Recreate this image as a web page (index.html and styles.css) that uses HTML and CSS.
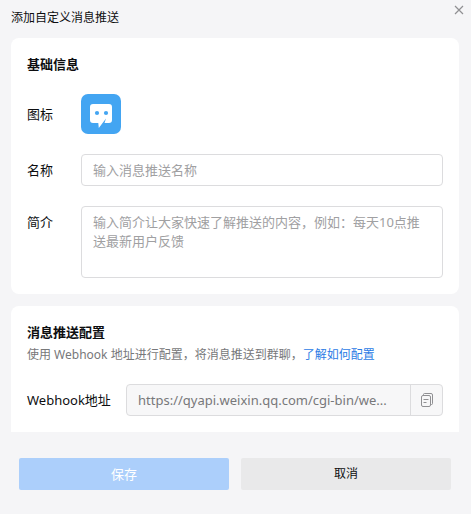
FILE: index.html
```html
<!DOCTYPE html>
<html lang="zh-CN">
<head>
<meta charset="utf-8">
<meta name="viewport" content="width=device-width, initial-scale=1">
<title>添加自定义消息推送</title>
<link rel="stylesheet" href="styles.css">
</head>
<body>
<form class="dialog">
  <header class="dialog-header">
    <h1 class="dialog-title">添加自定义消息推送</h1>
    <button class="close" type="button" aria-label="关闭">
      <svg width="10" height="10" viewBox="0 0 10 10" fill="none" stroke="currentColor" stroke-width="1.200"><path d="M1 1l8 8M9 1L1 9"/></svg>
    </button>
  </header>

  <main class="cards">
    <section class="card">
      <h2 class="card-title">基础信息</h2>
      <div class="row row-center">
        <span class="label" id="avatar-label">图标</span>
        <button class="avatar" type="button" aria-labelledby="avatar-label">
          <svg width="40" height="40" viewBox="0 0 40 40">
            <path fill="#fff" d="M12 10h16a3 3 0 0 1 3 3v13a3 3 0 0 1-3 3h-4.500L25 24.500 17.800 34 17.300 29H12a3 3 0 0 1-3-3V13a3 3 0 0 1 3-3z"/>
            <circle cx="16" cy="19" r="2.100" fill="#43a5f2"/>
            <circle cx="25" cy="19" r="2.100" fill="#43a5f2"/>
          </svg>
        </button>
      </div>
      <div class="row row-center">
        <label class="label" for="name">名称</label>
        <input class="field" id="name" type="text" placeholder="输入消息推送名称">
      </div>
      <div class="row">
        <label class="label label-top" for="intro">简介</label>
        <textarea class="field field-area" id="intro" placeholder="输入简介让大家快速了解推送的内容，例如：每天10点推送最新用户反馈"></textarea>
      </div>
    </section>

    <section class="card card-cut">
      <h2 class="card-title">消息推送配置</h2>
      <p class="desc">使用 Webhook 地址进行配置，将消息推送到群聊，<a class="link" href="#">了解如何配置</a></p>
      <div class="row row-center">
        <label class="label label-wide" for="url">Webhook地址</label>
        <div class="url-box">
          <input class="url" id="url" type="text" readonly value="https://qyapi.weixin.qq.com/cgi-bin/we...">
          <button class="copy" type="button" aria-label="复制">
            <svg width="14" height="16" viewBox="0 0 14 16" fill="none" stroke="currentColor">
              <rect x="1.500" y="3.500" width="9" height="11" rx="1.500"/>
              <path d="M3.500 3.500V2.500a1 1 0 0 1 1-1h6.500a1.500 1.500 0 0 1 1.500 1.500v8.500a1 1 0 0 1-1 1h-1M3.500 7.500h5M3.500 10.500h3"/>
            </svg>
          </button>
        </div>
      </div>
    </section>
  </main>

  <footer class="actions">
    <button class="btn btn-save" type="submit" disabled>保存</button>
    <button class="btn btn-cancel" type="button">取消</button>
  </footer>
</form>
</body>
</html>
```
FILE: styles.css
```css
* {
  box-sizing: border-box;
}

body {
  margin: 0;
  background: #f5f5f7;
  color: #0d0e10;
  font: 13px/20px "Noto Sans", "Noto Sans CJK SC", sans-serif;
}

button,
input,
textarea {
  margin: 0;
  padding: 0;
  border: 0;
  background: none;
  color: inherit;
  font: inherit;
}

h1,
h2,
p {
  margin: 0;
}

svg {
  display: block;
}

.dialog-header {
  display: flex;
  justify-content: space-between;
  align-items: flex-start;
  padding: 5px 7px 9px 11px;
}

.dialog-title {
  padding-top: 2px;
  font-size: 12px;
  font-weight: 400;
  line-height: 22px;
}

.close {
  color: #909093;
}

.cards {
  display: grid;
  gap: 12px;
  padding: 0 12px 0 11px;
}

.card {
  padding: 16px;
  border-radius: 8px;
  background: #fff;
}

.card-cut {
  border-radius: 8px 8px 0 0;
}

.card-title {
  font-size: 13px;
  font-weight: 700;
}

.row {
  display: flex;
  align-items: flex-start;
  margin-top: 20px;
}

.row-center {
  align-items: center;
}

.label {
  flex: 0 0 54px;
}

.label-wide {
  flex-basis: 99px;
}

.label-top {
  padding-top: 6px;
}

.avatar {
  width: 40px;
  height: 40px;
  border-radius: 7px;
  background: #43a5f2;
}

.field {
  flex: 1;
  min-width: 0;
  height: 32px;
  padding: 0 11px;
  border: 1px solid #dcdcde;
  border-radius: 4px;
}

.field-area {
  height: 72px;
  padding: 6px 11px;
  line-height: 19px;
  resize: none;
}

.field::placeholder {
  color: #a0a0a2;
}

.desc {
  margin-top: 4px;
  color: #77787a;
  font-size: 12px;
  line-height: 18px;
}

.link {
  color: #2c7be5;
  text-decoration: none;
}

.url-box {
  display: flex;
  flex: 1;
  min-width: 0;
  height: 32px;
  border: 1px solid #dcdcde;
  border-radius: 4px;
  background: #f7f7f8;
}

.url {
  flex: 1;
  min-width: 0;
  padding-left: 11px;
  color: #77787a;
}

.copy {
  display: grid;
  place-items: center;
  width: 32px;
  border-left: 1px solid #dcdcde;
  color: #909093;
}

.actions {
  display: grid;
  grid-template-columns: 1fr 1fr;
  gap: 12px;
  padding: 26px 20px 24px 19px;
}

.btn {
  height: 32px;
  border-radius: 2px;
}

.btn-save {
  background: #accffb;
  color: #fff;
}

.btn-cancel {
  background: #e9e9ea;
  font-size: 12px;
}
```
